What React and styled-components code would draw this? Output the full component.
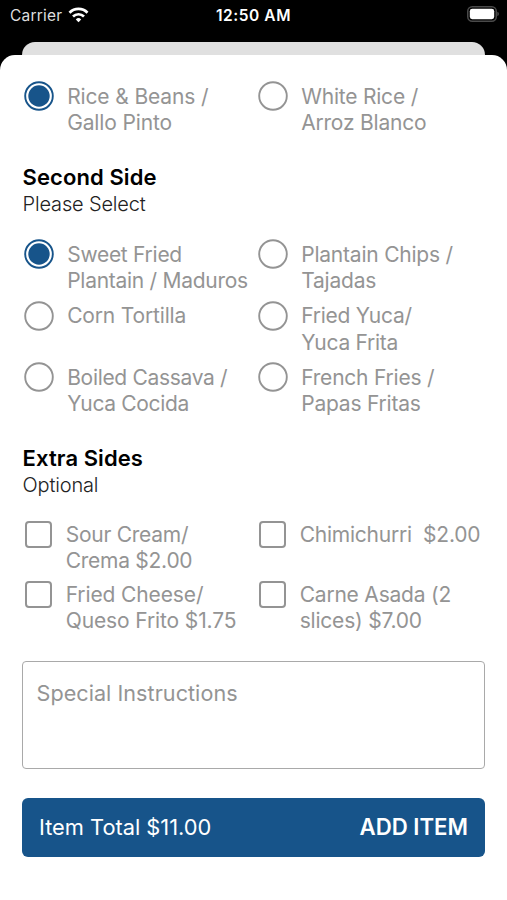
import { useState } from "react";
import styled, { createGlobalStyle } from "styled-components";

const GlobalStyle = createGlobalStyle`
    * {
        box-sizing: border-box;
    }
    body {
        margin: 0;
        background-color: #000;
        font-family: Inter, "Liberation Sans", sans-serif;
    }
`;
const Screen = styled.div`
    display: flex;
    flex-direction: column;
    width: 507px;
    height: 900px;
    overflow: hidden;
    background-color: #000;
`;
const StatusBar = styled.header`
    display: grid;
    grid-template-columns: 1fr auto 1fr;
    align-items: center;
    height: 30px;
    margin-bottom: 11.5px;
    padding: 0 8px 0 10px;
    color: #fff;
`;
const CarrierWrapper = styled.div`
    display: flex;
    align-items: center;
    gap: 6px;
    color: #dedede;
    font-size: 15.5px;
    letter-spacing: 0.2px;
`;
const Clock = styled.div`
    margin-right: 2px;
    font-size: 15.5px;
    font-weight: 600;
    letter-spacing: 0.55px;
`;
const BatteryIcon = styled.svg`
    justify-self: end;
    margin-top: -2px;
`;
const BackCard = styled.div`
    flex: none;
    height: 13.5px;
    margin: 0 22px;
    border-radius: 13px 13px 0 0;
    background-color: #e0e0e0;
`;
const Sheet = styled.main`
    flex: 1;
    padding: 28.6px 22px 0;
    border-radius: 15px 15px 0 0;
    background-color: #fff;
`;
const OptionGrid = styled.div`
    display: grid;
    grid-template-columns: 234px 1fr;
    grid-auto-rows: 52.6px;
    row-gap: ${({ $gap }) => $gap}px;
`;
const OptionWrapper = styled.div`
    display: flex;
    align-items: flex-start;
    padding-left: 2px;
    cursor: pointer;
`;
const RadioIcon = styled.svg`
    flex: none;
    width: 30px;
    height: 30px;
    margin: -2.4px 13.2px 0 0;
`;
const Checkbox = styled.span`
    flex: none;
    width: 27px;
    height: 27px;
    margin: -1.2px 14px 0 0.7px;
    border: 2px solid #949494;
    border-radius: 4px;
    background-color: ${({ $checked }) => ($checked ? "#17548a" : "transparent")};
`;
const OptionText = styled.span`
    padding-top: 0.4px;
    color: #949494;
    font-size: 21px;
    line-height: 26.3px;
    letter-spacing: ${({ $track = -0.21 }) => $track}px;
    white-space: pre;
`;
const SectionHeader = styled.div`
    padding: 27.9px 0 ${({ $bottom = 24.2 }) => $bottom}px;
`;
const SectionTitle = styled.h2`
    margin: 0 0 0 0.6px;
    color: #000;
    font-size: 22px;
    font-weight: 600;
    line-height: 27px;
    letter-spacing: 0.08px;
`;
const SectionHint = styled.p`
    margin: 0 0 0 0.6px;
    color: #222;
    font-size: 20px;
    font-weight: 300;
    line-height: 26.5px;
    letter-spacing: -0.17px;
`;
const Instructions = styled.textarea`
    display: block;
    width: 463px;
    height: 108px;
    margin: 26.8px 0 28.9px;
    padding: 18.4px 13.5px;
    border: 1.5px solid #a9a9a9;
    border-radius: 4px;
    outline: none;
    resize: none;
    background-color: #fff;
    font-family: inherit;
    font-size: 21.6px;
    line-height: 27px;
    letter-spacing: 0.04px;
    &::placeholder {
        color: #949494;
        opacity: 1;
    }
`;
const AddButton = styled.button`
    display: flex;
    align-items: center;
    justify-content: space-between;
    width: 463px;
    height: 59px;
    padding: 0 17px 1.5px;
    border: none;
    border-radius: 6px;
    background-color: #17548a;
    color: #fff;
    font-family: inherit;
    cursor: pointer;
`;
const Total = styled.span`
    font-size: 21.8px;
`;
const AddLabel = styled.span`
    font-size: 22.2px;
    font-weight: 600;
`;

const firstSides = [
    { label: "Rice & Beans /\nGallo Pinto", track: -0.14 },
    { label: "White Rice /\nArroz Blanco", track: -0.21 },
];
const secondSides = [
    { label: "Sweet Fried\nPlantain / Maduros", track: -0.27 },
    { label: "Plantain Chips /\nTajadas" },
    { label: "Corn Tortilla", track: -0.17 },
    { label: "Fried Yuca/\nYuca Frita", track: -0.27 },
    { label: "Boiled Cassava /\nYuca Cocida", track: -0.32 },
    { label: "French Fries /\nPapas Fritas" },
];
const extraSides = [
    { label: "Sour Cream/\nCrema $2.00", track: -0.26 },
    { label: "Chimichurri  $2.00", track: -0.24 },
    { label: "Fried Cheese/\nQueso Frito $1.75", track: -0.12 },
    { label: "Carne Asada (2\nslices) $7.00" },
];

const WifiIcon = () => (
    <svg width="21" height="16" viewBox="0 0 21 16" fill="none" stroke="#fff" strokeWidth="2.7">
        <path d="M1.5 5.7a12.7 12.7 0 0 1 18 0" />
        <path d="M5 9.5a7.8 7.8 0 0 1 11 0" />
        <path d="M10.5 15.2l-2.7-2.8a3.8 3.8 0 0 1 5.4 0z" fill="#fff" stroke="none" />
    </svg>
);

const Radio = ({ checked }) => (
    <RadioIcon viewBox="0 0 30 30">
        <circle cx="15" cy="15" r="13.8" fill="none" stroke={checked ? "#17548a" : "#949494"} strokeWidth="1.9" />
        {checked && <circle cx="15" cy="15" r="10.7" fill="#17548a" />}
    </RadioIcon>
);

const RadioGroup = ({ options, selected, onSelect }) => (
    <OptionGrid $gap={8.7}>
        {options.map((option, i) => (
            <OptionWrapper key={option.label} onClick={() => onSelect(i)}>
                <Radio checked={i === selected} />
                <OptionText $track={option.track}>{option.label}</OptionText>
            </OptionWrapper>
        ))}
    </OptionGrid>
);

const App = () => {
    const [first, setFirst] = useState(0);
    const [second, setSecond] = useState(0);
    const [extras, setExtras] = useState([]);

    const toggleExtra = (i) => {
        setExtras(extras.includes(i) ? extras.filter((e) => e !== i) : [...extras, i]);
    };

    return (
        <Screen>
            <GlobalStyle />
            <StatusBar>
                <CarrierWrapper>
                    Carrier <WifiIcon />
                </CarrierWrapper>
                <Clock>12:50 AM</Clock>
                <BatteryIcon width="33" height="16" viewBox="0 0 33 16">
                    <rect x="1.75" y="0.75" width="28.5" height="14.5" rx="4.5" fill="none" stroke="#4a4a4a" strokeWidth="1.5" />
                    <rect x="3.8" y="2.8" width="24.4" height="10.4" rx="2.4" fill="#fff" />
                    <path d="M31.4 5.8v4.4a2.4 2.4 0 0 0 0-4.4z" fill="#555" />
                </BatteryIcon>
            </StatusBar>
            <BackCard />
            <Sheet>
                <RadioGroup options={firstSides} selected={first} onSelect={setFirst} />
                <SectionHeader>
                    <SectionTitle>Second Side</SectionTitle>
                    <SectionHint>Please Select</SectionHint>
                </SectionHeader>
                <RadioGroup options={secondSides} selected={second} onSelect={setSecond} />
                <SectionHeader $bottom={23.4}>
                    <SectionTitle>Extra Sides</SectionTitle>
                    <SectionHint>Optional</SectionHint>
                </SectionHeader>
                <OptionGrid $gap={7.4}>
                    {extraSides.map((option, i) => (
                        <OptionWrapper key={option.label} onClick={() => toggleExtra(i)}>
                            <Checkbox $checked={extras.includes(i)} />
                            <OptionText $track={option.track}>{option.label}</OptionText>
                        </OptionWrapper>
                    ))}
                </OptionGrid>
                <Instructions placeholder="Special Instructions" />
                <AddButton>
                    <Total>Item Total $11.00</Total>
                    <AddLabel>ADD ITEM</AddLabel>
                </AddButton>
            </Sheet>
        </Screen>
    );
};

export default App;
